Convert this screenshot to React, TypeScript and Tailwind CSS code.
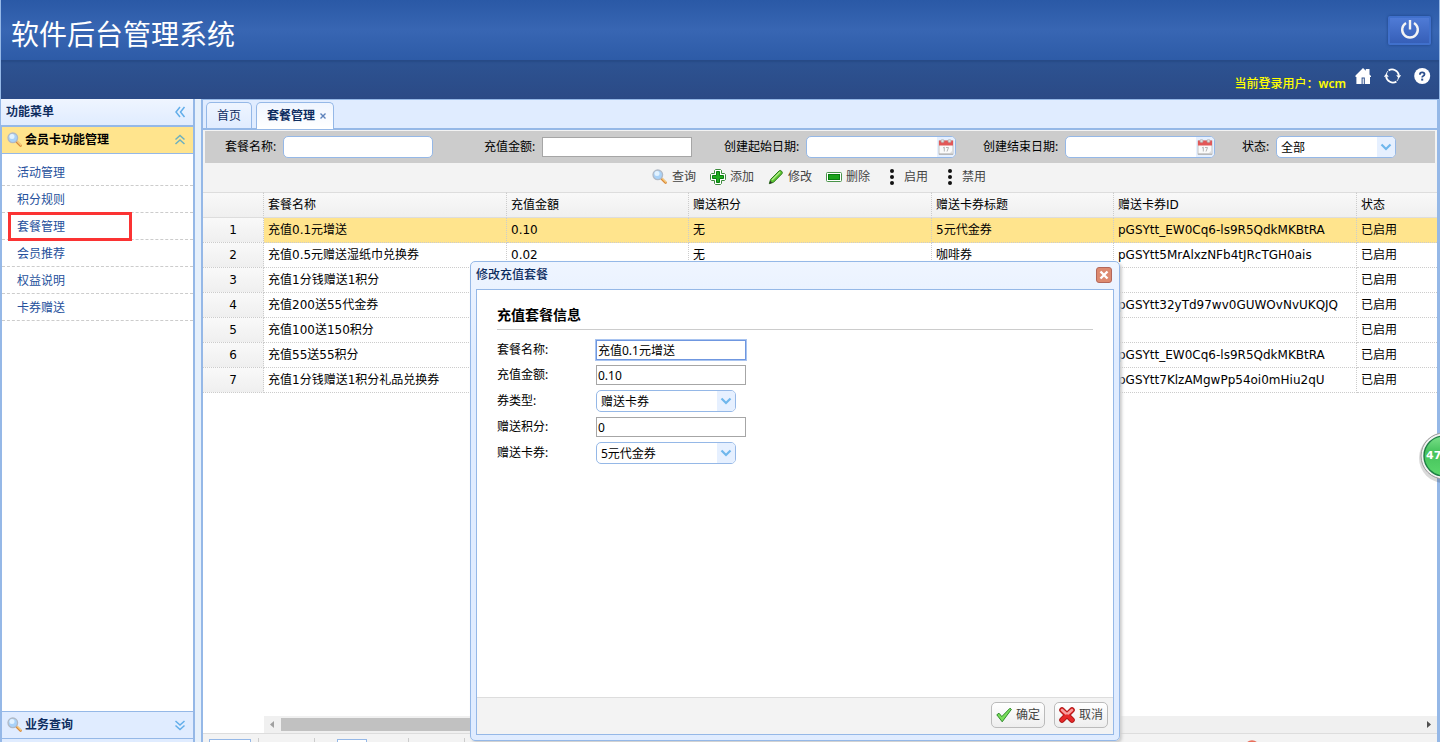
import React from "react";

const menuItems = ["活动管理", "积分规则", "套餐管理", "会员推荐", "权益说明", "卡券赠送"];

type Row = [string, string, string, string, string, string];

const rows: Row[] = [
  ["充值0.1元增送", "0.10", "无", "5元代金券", "pGSYtt_EW0Cq6-ls9R5QdkMKBtRA", "已启用"],
  ["充值0.5元赠送湿纸巾兑换券", "0.02", "无", "咖啡券", "pGSYtt5MrAlxzNFb4tJRcTGH0ais", "已启用"],
  ["充值1分钱赠送1积分", "", "", "", "", "已启用"],
  ["充值200送55代金券", "", "", "", "pGSYtt32yTd97wv0GUWOvNvUKQJQ", "已启用"],
  ["充值100送150积分", "", "", "", "", "已启用"],
  ["充值55送55积分", "", "", "", "pGSYtt_EW0Cq6-ls9R5QdkMKBtRA", "已启用"],
  ["充值1分钱赠送1积分礼品兑换券", "", "", "", "pGSYtt7KlzAMgwPp54oi0mHiu2qU", "已启用"],
];

const columns = ["套餐名称", "充值金額", "赠送积分", "赠送卡券标题", "赠送卡券ID", "状态"];

function SearchIcon() {
  return (
    <svg width="16" height="16" viewBox="0 0 16 16" className="shrink-0" aria-hidden="true">
      <path d="M9.8 9.8 L13.6 13.6" stroke="#d98a3a" strokeWidth="2.6" strokeLinecap="round" />
      <path d="M10.4 9.6 L13.8 13" stroke="#f8cf80" strokeWidth="1.2" strokeLinecap="round" />
      <circle cx="5.8" cy="5.8" r="4.8" fill="#a9d2f8" stroke="#b0b9c6" strokeWidth="1.3" />
      <circle cx="5" cy="4.6" r="2.5" fill="#e2f2ff" />
    </svg>
  );
}

function AddIcon() {
  return (
    <svg width="16" height="16" viewBox="0 0 16 16" className="shrink-0" aria-hidden="true">
      <path d="M5.5 .5h5l1 1v3h3l1 1v5l-1 1h-3v3l-1 1h-5l-1-1v-3h-3l-1-1v-5l1-1h3v-3z" fill="#fff" stroke="#3d8b3d" strokeWidth="1" strokeLinejoin="round" />
      <path d="M6.5 2.5h3v4h4v3h-4v4h-3v-4h-4v-3h4z" fill="#1fae1f" stroke="#0a7a10" strokeWidth="1" />
    </svg>
  );
}

function PencilIcon() {
  return (
    <svg width="16" height="16" viewBox="0 0 16 16" className="shrink-0" aria-hidden="true">
      <path d="M1.3 14.7 L2.6 10.4 L11.2 1.8 Q12.4 .9 13.6 2.2 Q14.9 3.5 14 4.7 L5.5 13.3 Z" fill="#5cc431" stroke="#2c7a1c" strokeWidth="1" strokeLinejoin="round" />
      <path d="M4 11 L12 3" stroke="#b4ec8e" strokeWidth="1.2" />
      <path d="M1.3 14.7 L2.2 11.8 L4.2 13.8 Z" fill="#333" />
    </svg>
  );
}

function RemoveIcon() {
  return (
    <svg width="16" height="16" viewBox="0 0 16 16" className="shrink-0" aria-hidden="true">
      <rect x=".5" y="3.5" width="15" height="9" rx="1" fill="#fff" stroke="#4a944a" strokeWidth="1" />
      <rect x="2.5" y="5.5" width="11" height="5" fill="#1aa31a" stroke="#0a7a10" strokeWidth="1" />
    </svg>
  );
}

function DotsIcon() {
  return (
    <svg width="16" height="16" viewBox="0 0 16 16" className="shrink-0" aria-hidden="true">
      <circle cx="8" cy="2" r="2" fill="#111" />
      <circle cx="8" cy="8" r="2" fill="#111" />
      <circle cx="8" cy="14" r="2" fill="#111" />
    </svg>
  );
}

function Chevrons({ dir, color }: { dir: "left" | "up" | "down"; color: string }) {
  const d = {
    left: "M8 3 L4 8 L8 13 M12.5 3 L8.5 8 L12.5 13",
    up: "M3.5 7.5 L8 3.5 L12.5 7.5 M3.5 12 L8 8 L12.5 12",
    down: "M3.5 4 L8 8 L12.5 4 M3.5 8.5 L8 12.5 L12.5 8.5",
  }[dir];
  return (
    <svg width="16" height="16" viewBox="0 0 16 16" className="shrink-0" aria-hidden="true">
      <path d={d} fill="none" stroke={color} strokeWidth="1.5" />
    </svg>
  );
}

function CalendarIcon() {
  return (
    <svg width="16" height="16" viewBox="0 0 16 16" aria-hidden="true">
      <rect x="1" y="2" width="14" height="13" fill="#fafafa" stroke="#c3c3c3" strokeWidth="1" />
      <rect x="1" y="1.5" width="14" height="5" fill="#e25757" />
      <circle cx="4.5" cy="2" r="1.6" fill="#ddd" stroke="#aaa" strokeWidth=".6" />
      <circle cx="11.5" cy="2" r="1.6" fill="#ddd" stroke="#aaa" strokeWidth=".6" />
      <path d="M5 9 L6.3 8.2 V12.5 M8 8.5 H10.5 L9 12.5" fill="none" stroke="#b5b5b5" strokeWidth="1" />
      <path d="M11 15 L15 11 V15 Z" fill="#ddd" />
      <path d="M1 15.2 H15" stroke="#aaa" strokeWidth="1" />
    </svg>
  );
}

function DateBox({ id }: { id: string }) {
  return (
    <span className="flex h-[22px] w-[150px] overflow-hidden rounded-[5px] border border-[#95b8e7] bg-white">
      <input id={id} type="text" className="min-w-0 flex-1 px-1 outline-none" />
      <button type="button" aria-label="选择日期" className="flex w-[18px] items-center justify-center bg-[#e6f0ff]">
        <CalendarIcon />
      </button>
    </span>
  );
}

function ComboBox({ id, value, wide }: { id: string; value: string; wide?: boolean }) {
  return (
    <span className={`relative flex h-[22px] overflow-hidden rounded-[5px] border border-[#95b8e7] bg-white ${wide ? "w-[140px]" : "w-[120px]"}`}>
      <select id={id} defaultValue={value} className="w-full appearance-none bg-transparent pt-px pl-1 leading-5 outline-none">
        <option>{value}</option>
      </select>
      <span className="pointer-events-none absolute inset-y-0 right-0 flex w-[18px] items-center justify-center bg-[#e6f0ff]">
        <svg width="12" height="8" viewBox="0 0 12 8" aria-hidden="true">
          <path d="M1.5 1.5 L6 6 L10.5 1.5" fill="none" stroke="#6fb7ec" strokeWidth="2.2" />
        </svg>
      </span>
    </span>
  );
}

function Header() {
  return (
    <header className="shrink-0 border-x border-[#95b8e7]">
      <div className="flex h-[60px] items-center justify-between bg-linear-to-b from-[#2a59a6] via-[#3866b3] to-[#2d5ba7] pr-2 pl-[10px]">
        <h1 className="pt-2 text-[28px] leading-10 text-white">软件后台管理系统</h1>
        <button type="button" aria-label="退出" className="flex h-[29px] w-[43px] items-center justify-center rounded-[2px] border-2 border-[#4070cc] bg-linear-to-b from-[#4f7bd6] to-[#365fb8] shadow-[0_0_3px_#1c3f80]">
          <svg width="20" height="20" viewBox="0 0 20 20" fill="none" stroke="#f4f4f4" strokeWidth="2.4" aria-hidden="true">
            <path d="M6 3 A7.8 7.8 0 1 0 14 3" />
            <path d="M10 0 V9.5" />
          </svg>
        </button>
      </div>
      <div className="flex h-[39px] items-start justify-end bg-linear-to-b from-[#2d5392] to-[#2b4a86] pr-2 shadow-[inset_0_2px_2px_#274a86]">
        <span className="mr-2 pt-4 leading-4 font-medium text-[#ffff00]">当前登录用户：<span className="font-semibold">wcm</span></span>
        <nav className="flex gap-[13px] pt-2">
          <a href="#home" aria-label="首页">
            <svg width="17" height="17" viewBox="0 0 17 17" fill="#fff" aria-hidden="true">
              <path fillRule="evenodd" d="M1.5 7.5 L9 0 L11.8 2.8 V1 H15.5 V6.5 L17 8 V9 H16 V16 H10.8 V9.5 H7.6 V16 H2.4 V9 H1.5 Z" />
              <path d="M8.6 10.5 H9.8 V16 H8.6 Z" />
            </svg>
          </a>
          <a href="#refresh" aria-label="刷新">
            <svg width="17" height="17" viewBox="0 0 17 17" aria-hidden="true">
              <path d="M4.6 2.4 A6.9 6.9 0 0 1 14.9 7.5 M12.4 13.6 A6.9 6.9 0 0 1 2.1 8.5" fill="none" stroke="#fff" strokeWidth="1.8" />
              <path d="M12.2 7.2 H17.2 L14.7 10.6 Z M-.2 8.8 H4.8 L2.3 5.4 Z" fill="#fff" />
              <path d="M2.5 6 A6.5 6.5 0 0 1 3.8 3.2 M14.4 10 A6.5 6.5 0 0 1 13 12.9" fill="none" stroke="#fff" strokeWidth="1" />
            </svg>
          </a>
          <a href="#help" aria-label="帮助">
            <svg width="17" height="17" viewBox="0 0 17 17" aria-hidden="true">
              <circle cx="8.2" cy="8" r="8" fill="#fff" />
              <path d="M5.9 6.7 Q5.9 4.4 8.2 4.4 Q10.5 4.4 10.5 6.3 Q10.5 7.4 9.2 8 Q8.2 8.5 8.2 9.6" fill="none" stroke="#2c4f8d" strokeWidth="1.8" />
              <rect x="7.2" y="10.6" width="2" height="2" fill="#2c4f8d" />
            </svg>
          </a>
        </nav>
      </div>
    </header>
  );
}

function Sidebar() {
  return (
    <aside className="flex w-[195px] shrink-0 flex-col border-r-2 border-l border-[#95b8e7] bg-white">
      <div className="flex h-[26px] shrink-0 items-center justify-between bg-linear-to-b from-[#eff5ff] to-[#e0ecff] pr-[5px] pl-[5px] font-bold text-[#0e2d5f]">
        <h2>功能菜单</h2>
        <Chevrons dir="left" color="#62aeea" />
      </div>
      <div className="flex min-h-0 flex-1 flex-col border-t-2 border-l border-[#95b8e7]">
        <button type="button" className="flex h-[27px] shrink-0 items-center border-b border-[#95b8e7] bg-[#ffe48d] pr-[5px] pl-[5px] font-bold text-black">
          <SearchIcon />
          <span className="ml-[2px] flex-1 text-left">会员卡功能管理</span>
          <Chevrons dir="up" color="#6cb0c0" />
        </button>
        <ul className="flex-1 pt-[5px]">
          {menuItems.map((item) => (
            <li key={item} className="relative flex h-[27px] items-center border-b border-dashed border-[#ccc] pt-[2px] pl-[15px]">
              <a href="#menu" className="text-[#25509c]">{item}</a>
              {item === "套餐管理" && <span className="absolute -top-px left-[6px] h-[29px] w-[124px] border-3 border-[#fb3333]" />}
            </li>
          ))}
        </ul>
        <button type="button" className="flex h-7 shrink-0 items-center border-y border-[#95b8e7] bg-[#e0ecff] pr-[5px] pl-[5px] font-bold text-[#0e2d5f]">
          <SearchIcon />
          <span className="ml-[2px] flex-1 text-left">业务查询</span>
          <Chevrons dir="down" color="#62aeea" />
        </button>
        <div className="h-[3px] shrink-0 bg-[#e0ecff]" />
      </div>
    </aside>
  );
}

function Tabs() {
  return (
    <div className="flex h-[31px] shrink-0 items-end gap-1 border-t border-b-2 border-[#95b8e7] bg-[#e0ecff] pl-[3px]">
      <button type="button" className="h-[26px] rounded-t-[5px] border border-b-0 border-[#95b8e7] bg-linear-to-b from-[#eff5ff] to-[#e0ecff] px-[10px] text-[#0e2d5f]">首页</button>
      <div className="-mb-px flex h-[27px] items-center rounded-t-[5px] border border-b-0 border-[#95b8e7] bg-linear-to-b from-[#eff5ff] to-white pr-[6px] pl-[10px] text-[#0e2d5f]">
        <button type="button" className="font-bold">套餐管理</button>
        <button type="button" aria-label="关闭" className="ml-1">
          <svg width="8" height="8" viewBox="0 0 8 8" aria-hidden="true">
            <path d="M1.5 1.5 L6.5 6.5 M6.5 1.5 L1.5 6.5" stroke="#5d82bb" strokeWidth="1.4" />
          </svg>
        </button>
      </div>
    </div>
  );
}

function Filters() {
  return (
    <form className="mx-[2px] mt-px grid h-8 shrink-0 grid-cols-[259px_240px_259px_259px_auto] items-center bg-[#ccc] pl-5">
      <div className="flex items-center">
        <label htmlFor="f-name" className="w-[58px]">套餐名称:</label>
        <input id="f-name" type="text" className="h-[22px] w-[150px] rounded-[5px] border border-[#95b8e7] bg-white px-1 outline-none" />
      </div>
      <div className="flex items-center">
        <label htmlFor="f-amount" className="w-[58px]">充值金额:</label>
        <input id="f-amount" type="text" className="h-5 w-[150px] border border-[#a6a6a6] bg-white px-1 outline-none" />
      </div>
      <div className="flex items-center">
        <label htmlFor="f-from" className="w-[82px]">创建起始日期:</label>
        <DateBox id="f-from" />
      </div>
      <div className="flex items-center">
        <label htmlFor="f-to" className="w-[82px]">创建结束日期:</label>
        <DateBox id="f-to" />
      </div>
      <div className="flex items-center">
        <label htmlFor="f-state" className="w-[34px]">状态:</label>
        <ComboBox id="f-state" value="全部" />
      </div>
    </form>
  );
}

const tools = [
  { label: "查询", icon: <SearchIcon /> },
  { label: "添加", icon: <AddIcon /> },
  { label: "修改", icon: <PencilIcon /> },
  { label: "删除", icon: <RemoveIcon /> },
  { label: "启用", icon: <DotsIcon /> },
  { label: "禁用", icon: <DotsIcon /> },
];

function Grid() {
  return (
    <table className="w-full table-fixed border-separate border-spacing-0 font-[DejaVu_Sans,Noto_Sans_CJK_SC,sans-serif]">
      <colgroup>
        <col className="w-[61px]" />
        <col className="w-[243px]" />
        <col className="w-[182px]" />
        <col className="w-[243px]" />
        <col className="w-[182px]" />
        <col className="w-[243px]" />
        <col />
      </colgroup>
      <thead>
        <tr className="h-[26px] bg-linear-to-b from-[#f9f9f9] to-[#efefef]">
          <th className="border-y border-r border-[#ddd] [border-right-style:dotted] border-r-[#ccc]" aria-label="序号" />
          {columns.map((c) => (
            <th key={c} className="border-y border-r border-[#ddd] [border-right-style:dotted] border-r-[#ccc] px-1 text-left font-normal last:border-r-0">{c}</th>
          ))}
        </tr>
      </thead>
      <tbody>
        {rows.map((row, i) => (
          <tr key={i} className={i === 0 ? "h-[25px] bg-[#ffe48d]" : "h-[25px] bg-white"}>
            <td className="border-r border-b border-dotted border-[#ccc] bg-linear-to-b from-[#f9f9f9] to-[#efefef] text-center">{i + 1}</td>
            {row.map((cell, j) => (
              <td key={j} className="border-r border-b border-dotted border-[#ccc] px-1 whitespace-nowrap last:border-r-0">{cell}</td>
            ))}
          </tr>
        ))}
      </tbody>
    </table>
  );
}

function ScrollBar() {
  return (
    <div className="ml-[61px] flex h-[17px] shrink-0 items-center bg-[#f0f0f0]">
      <svg width="17" height="17" viewBox="0 0 17 17" aria-hidden="true"><path d="M10 5 V12 L6 8.5 Z" fill="#a0a0a0" /></svg>
      <div className="h-[13px] w-[835px] bg-[#c1c1c1]" />
      <div className="flex-1" />
      <svg width="17" height="17" viewBox="0 0 17 17" aria-hidden="true"><path d="M7 5 V12 L11 8.5 Z" fill="#505050" /></svg>
    </div>
  );
}

function Pager() {
  return (
    <div className="flex h-[9px] shrink-0 items-start overflow-hidden border-t border-[#ddd] bg-[#f3f3f3] pt-1 pl-[6px]">
      <select aria-label="每页条数" className="mt-px h-5 w-[42px] appearance-none border border-[#95b8e7] bg-white" />
      <i className="ml-[7px] h-6 w-px bg-[#ccc]" />
      <i className="ml-[55px] h-6 w-px bg-[#ccc]" />
      <input aria-label="页码" className="mt-px ml-[22px] h-5 w-[30px] border border-[#95b8e7] bg-white" />
      <i className="ml-[41px] h-6 w-px bg-[#ccc]" />
      <i className="ml-[55px] h-6 w-px bg-[#ccc]" />
      <svg width="16" height="16" viewBox="0 0 16 16" className="mt-[2px] mr-[177px] ml-auto shrink-0" aria-hidden="true">
        <circle cx="8" cy="8" r="6.5" fill="none" stroke="#e8705c" strokeWidth="2.4" />
      </svg>
    </div>
  );
}

function EditDialog() {
  const box = "h-5 w-[150px] border border-[#a6a6a6] bg-white px-px outline-none";
  const line = "flex items-center";
  const label = "w-[99px]";
  return (
    <section role="dialog" aria-label="修改充值套餐" className="absolute top-[261px] left-[470px] z-10 flex h-[480px] w-[650px] flex-col rounded-[5px] border border-[#95b8e7] bg-linear-to-b from-[#eff5ff] to-[#e0ecff] to-20% p-[5px] shadow-[2px_2px_3px_#ccc]">
      <div className="flex h-[22px] shrink-0 items-start justify-between pr-[2px]">
        <h2 className="leading-4 font-medium text-[#0e2d5f]">修改充值套餐</h2>
        <button type="button" aria-label="关闭">
          <svg width="16" height="16" viewBox="0 0 16 16" aria-hidden="true">
            <rect x=".5" y=".5" width="15" height="15" rx="2.5" fill="#dd8a70" stroke="#b3675a" />
            <path d="M4.5 4.5 L11.5 11.5 M11.5 4.5 L4.5 11.5" stroke="#fff" strokeWidth="2.4" />
          </svg>
        </button>
      </div>
      <div className="flex flex-1 flex-col border border-[#95b8e7] bg-white">
        <form className="flex flex-1 flex-col gap-[5px] px-5 pt-[15px]">
          <h3 className="mb-[5px] h-[25px] border-b border-[#ccc] text-[14px] leading-5 font-bold">充值套餐信息</h3>
          <div className={line}>
            <label htmlFor="d-name" className={label}>套餐名称:</label>
            <input id="d-name" type="text" defaultValue="充值0.1元增送" className="h-5 w-[150px] border border-[#6f97e0] bg-white px-px shadow-[0_0_0_1px_#a9c4f0] outline-none" />
          </div>
          <div className={line}>
            <label htmlFor="d-amount" className={label}>充值金额:</label>
            <input id="d-amount" type="text" defaultValue="0.10" className={box} />
          </div>
          <div className={line}>
            <label htmlFor="d-type" className={label}>券类型:</label>
            <ComboBox id="d-type" value="赠送卡券" wide />
          </div>
          <div className={line}>
            <label htmlFor="d-points" className={label}>赠送积分:</label>
            <input id="d-points" type="text" defaultValue="0" className={box} />
          </div>
          <div className={line}>
            <label htmlFor="d-coupon" className={label}>赠送卡券:</label>
            <ComboBox id="d-coupon" value="5元代金券" wide />
          </div>
        </form>
        <div className="flex h-[37px] shrink-0 items-start justify-end gap-[9px] border-t border-[#ddd] bg-[#f3f3f3] pt-1 pr-[5px] text-[#444]">
          <button type="button" className="flex h-[26px] w-[54px] items-center justify-center gap-1 rounded-[5px] border border-[#bbb] bg-linear-to-b from-white to-[#eee]">
            <svg width="16" height="16" viewBox="0 0 16 16" className="shrink-0" aria-hidden="true">
              <path d="M.8 7.8 L3 6.2 L5.8 9.6 L14 1.2 L15.4 2.4 L6.2 14.8 Z" fill="#7ade5a" stroke="#2f8a2c" strokeWidth="1" strokeLinejoin="round" />
            </svg>
            确定
          </button>
          <button type="button" className="flex h-[26px] w-[54px] items-center justify-center gap-1 rounded-[5px] border border-[#bbb] bg-linear-to-b from-white to-[#eee]">
            <svg width="16" height="16" viewBox="0 0 16 16" className="shrink-0" aria-hidden="true">
              <path d="M3 3 L13 13 M13 3 L3 13" stroke="#b01818" strokeWidth="5.6" strokeLinecap="round" />
              <path d="M3 3 L13 13 M13 3 L3 13" stroke="#e62a2a" strokeWidth="3.8" strokeLinecap="round" />
              <path d="M3 3 L7 6.5 M13 3 L9 6.5" stroke="#f6a0a0" strokeWidth="2.4" strokeLinecap="round" />
            </svg>
            取消
          </button>
        </div>
      </div>
    </section>
  );
}

export default function App() {
  return (
    <div className="relative flex h-screen flex-col overflow-hidden bg-[#e6f0fb] font-[Noto_Sans,Noto_Sans_CJK_SC,sans-serif] text-[12px] leading-4 text-black">
      <Header />
      <div className="flex min-h-0 flex-1 gap-[6px]">
        <Sidebar />
        <main className="flex min-w-0 flex-1 flex-col border-r-3 border-l-2 border-[#95b8e7] bg-white">
          <Tabs />
          <div className="flex shrink-0 flex-col bg-[#f3f3f3]">
            <Filters />
            <div className="flex h-[29px] items-start justify-center gap-[14px] pt-[6px] pr-[2px] text-[#444]">
              {tools.map((t) => (
                <button key={t.label} type="button" className="flex items-center gap-1">
                  {t.icon}
                  {t.label}
                </button>
              ))}
            </div>
          </div>
          <div className="min-h-0 flex-1">
            <Grid />
          </div>
          <ScrollBar />
          <Pager />
        </main>
      </div>
      <EditDialog />
      <div className="absolute top-[430px] right-0 z-20 h-[54px] w-[22px] overflow-hidden">
        <svg width="22" height="54" viewBox="0 0 22 54" aria-hidden="true">
          <defs>
            <linearGradient id="ball" x1="0" y1="0" x2="0" y2="1">
              <stop offset="0" stopColor="#7be08a" />
              <stop offset="0.4" stopColor="#45c25c" />
              <stop offset="1" stopColor="#5bd86c" />
            </linearGradient>
          </defs>
          <circle cx="26" cy="28" r="25" fill="#000" opacity=".15" />
          <circle cx="26" cy="26" r="23" fill="#f3f3f3" stroke="#999" strokeWidth="1" />
          <circle cx="26" cy="26" r="20" fill="url(#ball)" stroke="#1e7f45" strokeWidth="1.4" />
          <text x="8" y="29" fontSize="11" fontWeight="bold" fontFamily="DejaVu Sans" fill="#fff">47</text>
        </svg>
      </div>
    </div>
  );
}
